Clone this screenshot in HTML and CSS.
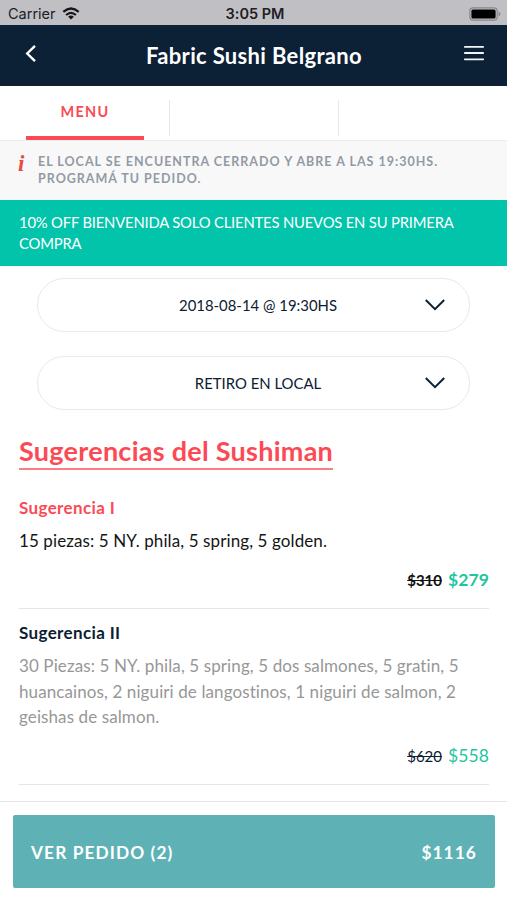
FILE: index.html
```html
<!DOCTYPE html>
<html lang="es">
<head>
<meta charset="utf-8">
<title>Fabric Sushi Belgrano</title>
<link rel="stylesheet" href="styles.css">
</head>
<body>
<div class="status">
  <div class="carrier"><span class="carrier-name">Carrier</span>
    <svg class="wifi" width="18" height="13" viewBox="0 0 18 13"><g fill="none" stroke="#17171a" stroke-width="2.2"><path d="M1.3 4.9Q9 -1.9 16.7 4.9"/><path d="M4.1 8Q9 3.6 13.9 8"/></g><path d="M6.1 9.7Q9 7.3 11.9 9.7L9 12.6Z" fill="#17171a"/></svg>
  </div>
  <span class="time">3:05 PM</span>
  <svg class="battery" width="32" height="14" viewBox="0 0 32 14"><rect x=".8" y=".8" width="27.4" height="12.4" rx="3.4" fill="none" stroke="#88888d" stroke-width="1.2"/><rect x="2.4" y="2.4" width="24.2" height="9.2" rx="1.6" fill="#000"/><path d="M29.6 4.6q1.8.6 1.8 2.4t-1.8 2.4z" fill="#88888d"/></svg>
</div>
<header class="header">
  <svg class="back" width="12" height="19" viewBox="0 0 12 19"><path d="M10 1.8L2.2 9.5L10 17.2" fill="none" stroke="#fff" stroke-width="2.4"/></svg>
  <h1 class="title">Fabric Sushi Belgrano</h1>
  <svg class="burger" width="20" height="16" viewBox="0 0 20 16"><path d="M.8 1.9H19.2M.8 8H19.2M.8 14.3H19.2" stroke="#f2f6fa" stroke-width="1.8" stroke-linecap="round"/></svg>
</header>
<nav class="tabs">
  <div class="tab"><span class="tab-label">MENU</span></div>
  <div class="tab"></div>
  <div class="tab"></div>
</nav>
<section class="notice">
  <span class="info">i</span>
  <p class="notice-text">EL LOCAL SE ENCUENTRA CERRADO Y ABRE A LAS 19:30HS.<br>PROGRAMÁ TU PEDIDO.</p>
</section>
<section class="promo">10% OFF BIENVENIDA SOLO CLIENTES NUEVOS EN SU PRIMERA<br>COMPRA</section>
<div class="selects">
  <div class="select"><span class="select-value">2018-08-14 @ 19:30HS</span><svg class="chevron" width="22" height="14" viewBox="0 0 22 14"><path d="M1.8 2L11 11.2L20.2 2" fill="none" stroke="#0c2034" stroke-width="2"/></svg></div>
  <div class="select"><span class="select-value">RETIRO EN LOCAL</span><svg class="chevron" width="22" height="14" viewBox="0 0 22 14"><path d="M1.8 2L11 11.2L20.2 2" fill="none" stroke="#0c2034" stroke-width="2"/></svg></div>
</div>
<main class="list">
  <h2 class="heading">Sugerencias del Sushiman</h2>
  <article class="item selected">
    <h3 class="name">Sugerencia I</h3>
    <p class="desc">15 piezas: 5 NY. phila, 5 spring, 5 golden.</p>
    <div class="prices"><s class="old">$310</s><span class="price">$279</span></div>
  </article>
  <article class="item">
    <h3 class="name">Sugerencia II</h3>
    <p class="desc">30 Piezas: 5 NY. phila, 5 spring, 5 dos salmones, 5 gratin, 5<br>huancainos, 2 niguiri de langostinos, 1 niguiri de salmon, 2<br>geishas de salmon.</p>
    <div class="prices"><s class="old">$620</s><span class="price">$558</span></div>
  </article>
</main>
<footer class="footer">
  <div class="order"><span class="order-label">VER PEDIDO (2)</span><span class="order-total">$1116</span></div>
</footer>
</body>
</html>
```
FILE: styles.css
```css
* { box-sizing: border-box; }
body {
  margin: 0;
  width: 507px;
  height: 900px;
  overflow: hidden;
  display: flex;
  flex-direction: column;
  background: #fff;
  font-family: Lato, sans-serif;
  font-variant-ligatures: none;
  color: #0c2034;
}
h1, h2, h3, p { margin: 0; }
svg { display: block; flex: none; }
.status, .header, .tabs, .notice, .promo, .selects, .footer { flex: none; }
.status {
  height: 25px;
  padding: 2px 6px 0 8px;
  display: grid;
  grid-template-columns: 1fr auto 1fr;
  align-items: center;
  background: #c0bfc4;
  color: #202024;
  font-family: Inter, sans-serif;
  font-size: 14.5px;
}
.carrier { display: flex; align-items: center; gap: 6px; }
.time { font-weight: 600; padding-left: 1px; }
.battery { justify-self: end; }
.header {
  height: 61px;
  padding: 0 23px 0 25px;
  display: grid;
  grid-template-columns: 30px 1fr 30px;
  align-items: center;
  background: #0c2036;
  color: #fff;
}
.back { margin-bottom: 5px; }
.burger { justify-self: end; margin-bottom: 5px; }
.title {
  padding-right: 1px;
  text-align: center;
  font-size: 22px;
  line-height: 28px;
  font-weight: 700;
  letter-spacing: .33px;
}
.tabs {
  height: 55px;
  display: grid;
  grid-template-columns: repeat(3, 1fr);
  border-bottom: 1px solid #ededee;
}
.tab {
  padding: 14px 26px 0;
  background: linear-gradient(#e6e7e8, #e6e7e8) right 14px / 1px 36px no-repeat;
}
.tab:last-child { background: none; }
.tab:first-child { width: 170px; }
.tab-label {
  display: block;
  height: 40px;
  border-bottom: 4px solid #fc4a55;
  color: #fc4a55;
  text-align: center;
  font-size: 14.5px;
  line-height: 24px;
  letter-spacing: 1.2px;
  font-weight: 700;
}
.notice {
  height: 59px;
  padding: 12px 18px 0;
  display: flex;
  background: #f8f8f8;
}
.info {
  width: 20px;
  color: #e84c45;
  font: italic bold 23px/22px "Liberation Serif", serif;
}
.notice-text {
  color: #929aa5;
  font-size: 12.5px;
  line-height: 17px;
  font-weight: 700;
  letter-spacing: 1px;
  white-space: nowrap;
}
.promo {
  height: 66px;
  padding: 12px 19px;
  background: #02c4aa;
  color: #fff;
  font-size: 14.8px;
  line-height: 21px;
  letter-spacing: -.18px;
  white-space: nowrap;
}
.selects { padding: 12px 37px 0; display: grid; gap: 24px; }
.select {
  height: 54px;
  padding: 0 23px 0 60px;
  display: flex;
  align-items: center;
  border: 1px solid #e8e9ea;
  border-radius: 27px;
}
.select-value { flex: 1; text-align: center; font-size: 14.9px; padding-right: 6px; }
.list { flex: 1; min-height: 0; padding: 24px 18px 0 19px; }
.heading {
  width: max-content;
  height: 36px;
  border-bottom: 2px solid #fc7c84;
  color: #fc4a55;
  font-size: 27px;
  line-height: 34px;
  font-weight: 700;
  letter-spacing: .26px;
}
.item { border-bottom: 1px solid #e5e6e7; padding-bottom: 16px; }
.heading + .item { margin-top: 26px; }
.item + .item { padding-top: 12px; }
.name { font-size: 17px; line-height: 24px; font-weight: 700; letter-spacing: .36px; }
.desc { margin-top: 8px; color: #979797; font-size: 17px; line-height: 25.8px; letter-spacing: .1px; white-space: nowrap; }
.prices { margin-top: 14px; height: 24px; display: flex; justify-content: flex-end; align-items: baseline; gap: 6px; }
.old { font-size: 15px; }
.price { color: #1fc6a0; font-size: 17.5px; line-height: 24px; letter-spacing: .1px; }
.selected .name { color: #fc4a55; }
.selected .desc { color: #151515; }
.selected .old { color: #111; font-weight: 700; }
.selected .price { font-weight: 700; }
.footer { height: 99px; padding: 13px 12px 12px 13px; border-top: 1px solid #e3e4e5; }
.order {
  height: 73px;
  padding: 1px 18px 0;
  display: flex;
  align-items: center;
  justify-content: space-between;
  background: #5eb2b6;
  border-radius: 2px;
  color: #fff;
  font-size: 17.3px;
  letter-spacing: 1.1px;
  font-weight: 700;
}
```
